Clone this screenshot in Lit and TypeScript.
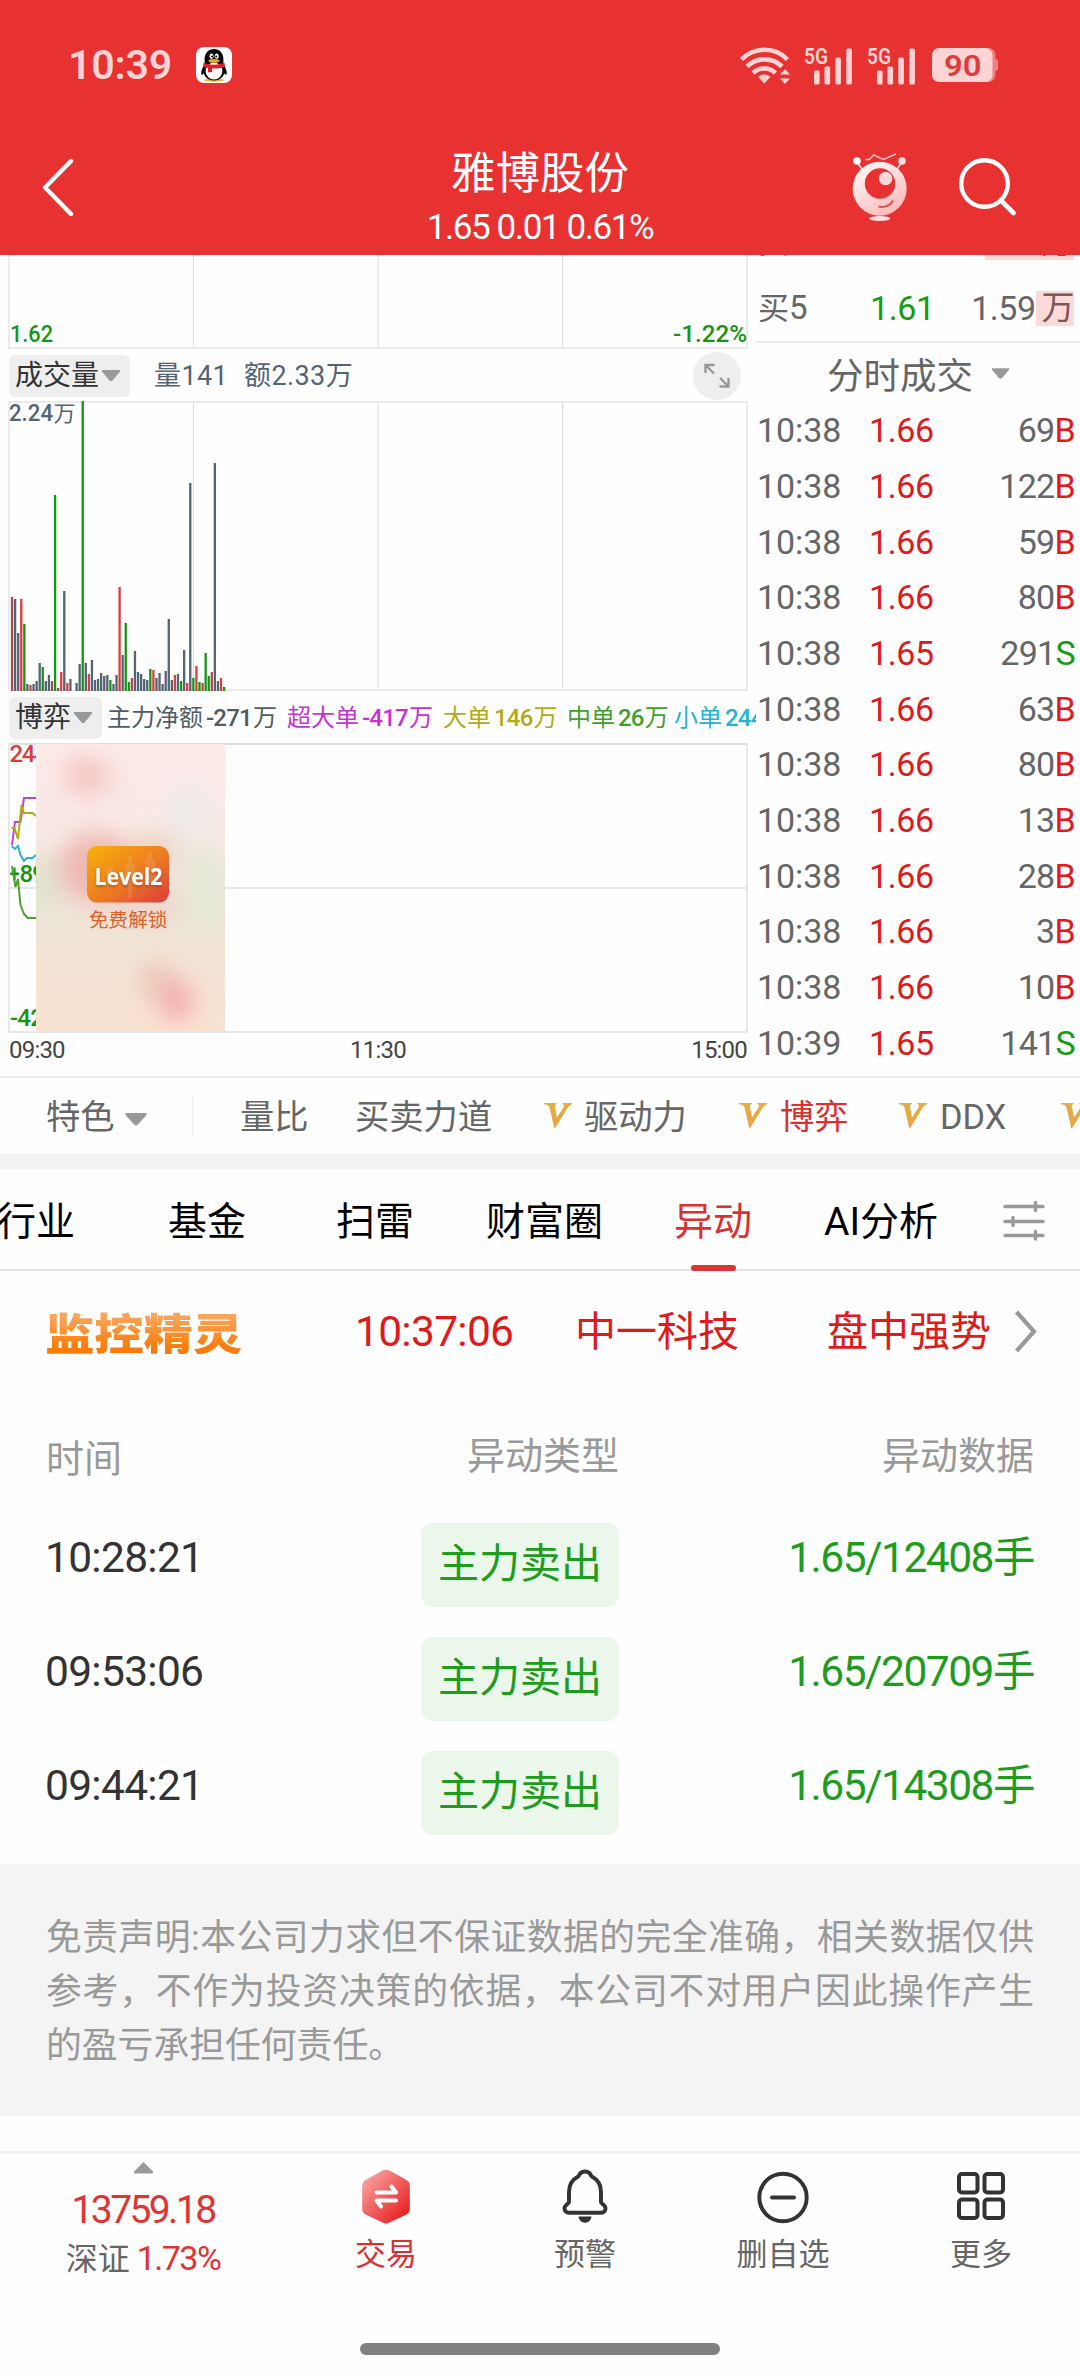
import { LitElement, html, svg, css } from "lit";
import { customElement } from "lit/decorators.js";

const sans = css`Roboto, "Noto Sans CJK SC", sans-serif`;

const reset = css`
  * {
    box-sizing: border-box;
  }
  svg {
    display: block;
    flex: none;
  }
  span {
    white-space: nowrap;
  }
`;

/* ---------- status bar + title bar ---------- */
@customElement("app-header")
class AppHeader extends LitElement {
  static styles = [
    reset,
    css`
      :host {
        display: block;
        height: 255px;
        background: #e83131;
        color: #fff;
        font-family: ${sans};
      }
      .status {
        display: flex;
        align-items: center;
        height: 130px;
        padding-left: 68px;
        padding-right: 82px;
      }
      .clock {
        font-size: 41px;
        font-weight: 600;
        line-height: 1;
        width: 128px;
        letter-spacing: -0.2px;
        color: #fdd3d3;
      }
      .wifi {
        margin-left: auto;
        margin-right: 14px;
      }
      .signal {
        margin-right: 13px;
      }
      .battery {
        margin-left: 2px;
      }
      .bar {
        display: grid;
        grid-template-columns: 300px 1fr 300px;
        height: 125px;
        align-items: center;
      }
      .back {
        margin: -11px 0 0 41px;
      }
      .mid {
        display: flex;
        flex-direction: column;
        align-items: center;
      }
      .name {
        font-size: 44.5px;
        line-height: 54px;
        margin-top: 9.5px;
      }
      .quote {
        font-size: 35px;
        line-height: 40px;
        margin-top: 7.5px;
        letter-spacing: -1.4px;
      }
      .tools {
        display: flex;
        align-items: center;
        gap: 49px;
        padding-left: 72px;
        margin-top: -13px;
      }
    `,
  ];

  signal() {
    return html`<svg class="signal" width="50" height="40" viewBox="0 0 50 40">
      <text x="0" y="18.5" font-size="22" font-weight="600" fill="#fdd3d3" textLength="24" lengthAdjust="spacingAndGlyphs">5G</text>
      <g fill="#fdd3d3">
        <rect x="10" y="25.5" width="5.6" height="14" rx="1.5" />
        <rect x="20.5" y="21.5" width="5.6" height="18" rx="1.5" />
        <rect x="31.3" y="12.5" width="5.6" height="27" rx="1.5" />
        <rect x="42.3" y="3.5" width="5.6" height="36" rx="1.5" />
      </g>
    </svg>`;
  }

  render() {
    return html`
      <div class="status">
        <span class="clock">10:39</span>
        <svg width="36" height="36" viewBox="0 0 36 36">
          <rect width="36" height="36" rx="8" fill="#fff" />
          <ellipse cx="18" cy="33.2" rx="10" ry="1.6" fill="#e8b63a" />
          <path d="M8.600 17.500C6 21 4.600 25 5.400 27.600c1.200.4 2.200-.7 3-2.400zM27.400 17.500c2.600 3.500 4 7.500 3.200 10.100-1.200.4-2.200-.7-3-2.400z" fill="#0a0a0a" />
          <path d="M8.600 16V12C8.600 6 12.600 2 18 2s9.400 4 9.400 10v4c1.500 4 1.800 7 1 10-1.200 4.500-5.200 7.400-10.400 7.400S8.800 30.500 7.600 26c-.8-3-.5-6 1-10z" fill="#0a0a0a" />
          <ellipse cx="18" cy="24" rx="8.400" ry="8.600" fill="#fff" />
          <path d="M7.600 15.800c6 2.600 14.800 2.600 20.800 0l.6 3.600c-3.400 1.500-7 2.100-11 2.200l-2 0v3.600h-4v-4.200c-2-.4-3.600-.9-5-1.600z" fill="#e21f26" />
          <ellipse cx="15.500" cy="9.200" rx="2" ry="2.700" fill="#fff" />
          <ellipse cx="20.700" cy="9.200" rx="2" ry="2.700" fill="#fff" />
          <circle cx="16" cy="9.400" r="1" fill="#000" />
          <circle cx="20.300" cy="9.400" r="1" fill="#000" />
          <ellipse cx="18" cy="13.800" rx="5.600" ry="1.900" fill="#f0a81e" />
        </svg>
        <svg class="wifi" width="50" height="37" viewBox="0 0 50 37">
          <g fill="none" stroke="#fdd3d3" stroke-width="4.600">
            <path d="M1.500 12.500C14-.5 35-.5 47.500 12.500" />
            <path d="M7 19.500c9.500-9.500 25.500-9.500 35 0" />
            <path d="M13 26c6.500-6 16.500-6 22.500 0" />
          </g>
          <path d="M24.300 36.500l-6-6.500c3-3.500 9-3.500 12 0z" fill="#fdd3d3" />
          <path d="M40 27.500h10l-5-5.500zM40 31.500h10l-5 5.500z" fill="#fdd3d3" />
        </svg>
        ${this.signal()} ${this.signal()}
        <svg class="battery" width="66" height="36" viewBox="0 0 66 36">
          <rect x="8" y="1" width="55.500" height="34" rx="7" fill="#f08080" />
          <path d="M63 12c2.500 0 3 1 3 3v6c0 2-.5 3-3 3z" fill="#f08080" />
          <rect x="0" y="1" width="60.500" height="34" rx="7" fill="#fdd3d3" />
          <text x="12" y="28.500" font-size="30" font-weight="600" fill="#e03a3a" textLength="37.500" lengthAdjust="spacingAndGlyphs">90</text>
        </svg>
      </div>
      <div class="bar">
        <svg class="back" width="34" height="58" viewBox="0 0 34 58">
          <path d="M30 3L4 29.500L30 56" fill="none" stroke="#fff" stroke-width="4.400" stroke-linecap="round" stroke-linejoin="round" />
        </svg>
        <div class="mid">
          <span class="name">雅博股份</span>
          <span class="quote">1.65 0.01 0.61%</span>
        </div>
        <div class="tools">
          <svg width="56" height="70" viewBox="0 0 56 70">
            <defs>
              <linearGradient id="face" x1="0.200" y1="0" x2="0.800" y2="1">
                <stop offset="0.200" stop-color="#ffeded" />
                <stop offset="1" stop-color="#fcb5b5" />
              </linearGradient>
            </defs>
            <path d="M5 11l5 7M50 11l-5 7" stroke="#fde0e0" stroke-width="1.600" />
            <circle cx="5" cy="10" r="3.800" fill="#fff" />
            <circle cx="50" cy="10" r="3.800" fill="#fdd" />
            <path d="M13.500 8.500h4l4-4.500 10 4.500L44 3" fill="none" stroke="#fbc0c0" stroke-width="1.500" />
            <circle cx="27.700" cy="37.700" r="27" fill="url(#face)" />
            <circle cx="28" cy="32.500" r="15.200" fill="#e83131" />
            <circle cx="33.600" cy="27.500" r="6.800" fill="#fdd8d8" />
            <path d="M26.500 55.500c6 1.500 12-1 14.500-6" fill="none" stroke="#e05050" stroke-width="2" />
            <ellipse cx="27.700" cy="67.500" rx="10.500" ry="2.400" fill="#fdd" />
          </svg>
          <svg width="60" height="62" viewBox="0 0 60 62">
            <circle cx="27.500" cy="28.500" r="23.300" fill="none" stroke="#fff" stroke-width="4.400" />
            <path d="M44 45.500L56.500 58" stroke="#fff" stroke-width="4.600" stroke-linecap="round" />
          </svg>
        </div>
      </div>
    `;
  }
}

/* ---------- intraday charts ---------- */
type Hue = "r" | "d" | "g" | "s";
const volumes: [Hue, number][] = [
  ["d", 94], ["s", 92], ["s", 58], ["r", 92], ["g", 67], ["s", 7], ["r", 6], ["s", 7], ["s", 10], ["s", 28],
  ["g", 24], ["s", 10], ["s", 16], ["d", 10], ["g", 196], ["s", 3], ["r", 19], ["s", 100], ["r", 8], ["s", 12],
  ["s", 0], ["s", 8], ["s", 27], ["g", 290], ["s", 28], ["r", 17], ["s", 31], ["s", 11], ["s", 12], ["s", 18],
  ["s", 15], ["s", 16], ["g", 11], ["s", 7], ["s", 16], ["r", 104], ["s", 36], ["g", 68], ["g", 9], ["d", 13],
  ["s", 40], ["s", 19], ["s", 17], ["s", 12], ["s", 11], ["g", 22], ["r", 21], ["s", 13], ["s", 18], ["s", 7],
  ["s", 20], ["s", 72], ["s", 11], ["r", 16], ["s", 17], ["g", 10], ["s", 41], ["r", 8], ["s", 208], ["g", 13],
  ["r", 25], ["g", 9], ["r", 8], ["g", 38], ["g", 15], ["d", 19], ["s", 228], ["s", 10], ["r", 13], ["g", 4],
];
const hues: Record<Hue, string> = { r: "#dc3c3c", d: "#a84a50", g: "#149614", s: "#546474" };

const flows = [
  ["主力净额", "-271", "万", "main"],
  ["超大单", "-417", "万", "huge"],
  ["大单", "146", "万", "large"],
  ["中单", "26", "万", "medium"],
  ["小单", "244", "", "small"],
] as const;

@customElement("intraday-chart")
class IntradayChart extends LitElement {
  static styles = [
    reset,
    css`
      :host {
        display: block;
        width: 756px;
        height: 821px;
        overflow: hidden;
        font-family: ${sans};
      }
      .row {
        display: flex;
        align-items: center;
        height: 51px;
        padding-left: 9px;
        line-height: 42px;
      }
      .pill {
        display: flex;
        align-items: center;
        gap: 3px;
        height: 42px;
        padding: 0 10px 0 6px;
        border-radius: 6px;
        background: #eee;
        color: #333;
        font-size: 28px;
      }
      .stat {
        font-size: 27px;
        color: #546474;
        letter-spacing: 0.400px;
      }
      .stat.a {
        margin-left: 24px;
        width: 90px;
      }
      .expand {
        margin-left: auto;
        margin-right: 15px;
      }
      .flows {
        display: grid;
        grid-template-columns: 180px 156px 124px 107px 84px;
        margin-left: 5px;
        font-size: 24px;
      }
      .flow b {
        font-weight: 500;
        margin: 0 1px 0 3px;
        font-size: 24px;
        letter-spacing: -0.800px;
      }
      .main {
        color: #4f5c66;
      }
      .huge {
        color: #c832d2;
      }
      .large {
        color: #b4aa14;
      }
      .medium {
        color: #3fa02d;
      }
      .small {
        color: #23b4d2;
      }
      .times {
        display: flex;
        justify-content: space-between;
        padding: 0 9px;
        height: 40px;
        line-height: 35px;
        font-size: 24px;
        color: #444;
        letter-spacing: -0.800px;
      }
    `,
  ];

  caret(w = 18, h = 11) {
    return html`<svg width=${w} height=${h} viewBox="0 0 18 11"><path d="M0 0h18v1.500L10.500 10.500q-1.500 1-3 0L0 1.500z" fill="#999" /></svg>`;
  }

  render() {
    return html`
      <svg width="756" height="95" viewBox="0 255 756 95">
        <path d="M9 255V348H747V255M378 255v93" fill="none" stroke="#ebebeb" stroke-width="2" />
        <path d="M193.500 255v93M562.500 255v93" stroke="#dcdcdc" />
        <g font-size="24" font-weight="500" fill="#149614">
          <text x="10" y="342" textLength="43" lengthAdjust="spacingAndGlyphs">1.62</text>
          <text x="673" y="342" textLength="74" lengthAdjust="spacingAndGlyphs">-1.22%</text>
        </g>
      </svg>
      <div class="row">
        <div class="pill"><span>成交量</span>${this.caret()}</div>
        <span class="stat a">量141</span>
        <span class="stat">额2.33万</span>
        <svg class="expand" width="48" height="48" viewBox="0 0 48 48">
          <circle cx="24" cy="24" r="24" fill="#eee" />
          <path d="M12.500 21V13H21.500M13.500 14L21 21.500M35.500 26v8.500H26.500M34.500 33.500L27 26" fill="none" stroke="#999" stroke-width="2.400" />
        </svg>
      </div>
      <svg width="756" height="291" viewBox="0 401 756 291">
        <path d="M9 402H747V690H9zM378 402v288" fill="none" stroke="#ebebeb" stroke-width="2" />
        <path d="M193.500 402v288M562.500 402v288" stroke="#dcdcdc" />
        <text x="9" y="420.500" font-size="24" fill="#546474" font-weight="500" textLength="44" lengthAdjust="spacingAndGlyphs">2.24</text>
        <text x="53.500" y="420.500" font-size="22" fill="#546474">万</text>
        ${volumes.map(
          ([c, h], i) => svg`<rect x=${(10.9 + i * 3.073).toFixed(2)} y=${691 - h} width="2.300" height=${h} fill=${hues[c]} />`
        )}
      </svg>
      <div class="row">
        <div class="pill"><span>博弈</span>${this.caret()}</div>
        <div class="flows">
          ${flows.map(([k, n, u, c]) => html`<span class="flow ${c}">${k}<b>${n}</b>${u}</span>`)}
        </div>
      </div>
      <svg width="756" height="290" viewBox="0 743 756 290">
        <defs>
          <linearGradient id="veil" x1="0" y1="0" x2="0" y2="1">
            <stop offset="0" stop-color="#fceae9" />
            <stop offset="0.350" stop-color="#f8e9e5" />
            <stop offset="0.620" stop-color="#efe5d8" />
            <stop offset="1" stop-color="#fae2d0" />
          </linearGradient>
          <linearGradient id="badge" x1="0" y1="0" x2="1" y2="1">
            <stop offset="0" stop-color="#f8b208" />
            <stop offset="0.550" stop-color="#ec7a22" />
            <stop offset="1" stop-color="#dc3c40" />
          </linearGradient>
          <filter id="soft" x="-60%" y="-60%" width="220%" height="220%"><feGaussianBlur stdDeviation="12" /></filter>
          <filter id="shade"><feDropShadow dx="0" dy="2" stdDeviation="1.500" flood-color="#a03c10" flood-opacity="0.600" /></filter>
          <clipPath id="pane"><rect x="36" y="744" width="189" height="287" /></clipPath>
          <clipPath id="edge"><rect x="0" y="743" width="36" height="290" /></clipPath>
        </defs>
        <path d="M9 744H747" stroke="#dedede" stroke-width="2" />
        <path d="M9 744V1032H747V744M9 888H747" fill="none" stroke="#e8e8e8" stroke-width="2" />
        <g clip-path="url(#edge)" fill="none" stroke-width="2">
          <g font-size="24" font-weight="500" stroke="none">
            <text x="9.500" y="762" fill="#dc3c3c" letter-spacing="-1.300">244</text>
            <text x="9.500" y="882" fill="#149614" textLength="10" lengthAdjust="spacingAndGlyphs">+</text>
            <text x="19.500" y="882" fill="#149614" letter-spacing="-1">89</text>
            <text x="10" y="1026" fill="#149614" letter-spacing="-0.800">-42</text>
          </g>
          <path d="M12 845L15 822H20.500L24 798H36" stroke="#be46c8" />
          <path d="M11.500 828H14.500L18 839L21.500 805L24 813H32.500L36 816" stroke="#b4aa14" />
          <path d="M11.500 846L15 849L18 846L20.500 855L24 861L27 858H32.500L36 855" stroke="#23b4d2" />
          <path d="M12 866L15.500 887L18 879L20.500 905L24 914L27.500 918H36" stroke="#4ba032" />
        </g>
        <g clip-path="url(#pane)">
          <rect x="36" y="744" width="189" height="287" fill="url(#veil)" />
          <g filter="url(#soft)">
            <ellipse cx="86" cy="776" rx="22" ry="19" fill="#f5c4c0" />
            <ellipse cx="112" cy="782" rx="10" ry="9" fill="#f0dcd4" />
            <ellipse cx="188" cy="812" rx="20" ry="28" fill="#ededea" />
            <ellipse cx="42" cy="885" rx="20" ry="32" fill="#e0e3ce" />
            <ellipse cx="203" cy="888" rx="26" ry="44" fill="#e5e8d8" />
            <ellipse cx="96" cy="868" rx="38" ry="36" fill="#efb8b2" />
            <ellipse cx="155" cy="850" rx="24" ry="18" fill="#ecd3c2" />
            <ellipse cx="150" cy="905" rx="34" ry="16" fill="#efd3cb" />
            <ellipse cx="157" cy="982" rx="18" ry="20" fill="#ecc6b8" />
            <ellipse cx="177" cy="1001" rx="15" ry="20" fill="#f4a6a8" />
          </g>
        </g>
        <rect x="87" y="846" width="82" height="56.600" rx="10" fill="url(#badge)" />
        <path d="M107 867h6v18h-6zM125 864h10v20h-10zM128 856h4v42h-4zM145 859h10v19h-10zM148 852h4v32h-4z" fill="#fff" fill-opacity="0.100" />
        <text x="94.500" y="884.500" font-family="Open Sans, sans-serif" font-size="22.500" font-weight="700" fill="#fff" filter="url(#shade)" textLength="68" lengthAdjust="spacingAndGlyphs">Level2</text>
        <text x="89" y="926.500" font-size="19.600" fill="#e0602a">免费解锁</text>
      </svg>
      <div class="times"><span>09:30</span><span>11:30</span><span>15:00</span></div>
    `;
  }
}

/* ---------- order book tail + tick list ---------- */
const ticks: [string, string, string, "B" | "S"][] = [
  ["10:38", "1.66", "69", "B"],
  ["10:38", "1.66", "122", "B"],
  ["10:38", "1.66", "59", "B"],
  ["10:38", "1.66", "80", "B"],
  ["10:38", "1.65", "291", "S"],
  ["10:38", "1.66", "63", "B"],
  ["10:38", "1.66", "80", "B"],
  ["10:38", "1.66", "13", "B"],
  ["10:38", "1.66", "28", "B"],
  ["10:38", "1.66", "3", "B"],
  ["10:38", "1.66", "10", "B"],
  ["10:39", "1.65", "141", "S"],
];

@customElement("tick-list")
class TickList extends LitElement {
  static styles = [
    reset,
    css`
      :host {
        display: block;
        width: 324px;
        height: 821px;
        overflow: hidden;
        font-family: ${sans};
        font-size: 34px;
        color: #666;
      }
      .book {
        display: flex;
        flex-direction: column;
        justify-content: flex-end;
        height: 88px;
        overflow: hidden;
        border-bottom: 2px solid #ebebeb;
      }
      .line {
        display: grid;
        flex: none;
        grid-template-columns: 112px 1fr auto;
        align-items: center;
        height: 55.700px;
        padding-left: 1px;
        padding-right: 5px;
        line-height: 36px;
      }
      .book .line {
        height: 66px;
        padding-right: 6px;
        padding-left: 2px;
      }
      .lv {
        font-size: 33px;
      }
      .lv i {
        font-style: normal;
        font-size: 31px;
      }
      .p {
        letter-spacing: -0.400px;
      }
      .q {
        letter-spacing: -0.700px;
      }
      .tick .t {
        letter-spacing: -0.100px;
      }
      .amt {
        display: flex;
        align-items: center;
        letter-spacing: -0.500px;
      }
      .depth {
        height: 35px;
        line-height: 34px;
        background: #fbdad9;
        color: #7d5656;
        font-size: 33px;
        padding-left: 6px;
      }
      .wide {
        width: 89px;
        text-align: right;
      }
      .r {
        color: #e01a1a;
      }
      .g {
        color: #149c14;
      }
      .title {
        display: flex;
        align-items: center;
        gap: 19px;
        height: 59.300px;
        padding-left: 71px;
        padding-top: 9px;
        font-size: 36.500px;
        line-height: 40px;
      }
      .title svg {
        margin-top: -7px;
      }
    `,
  ];

  render() {
    return html`
      <div class="book">
        <div class="line">
          <span class="lv"><i>买</i></span><span></span>
          <span class="depth wide">万</span>
        </div>
        <div class="line">
          <span class="lv"><i>买</i>5</span>
          <span class="p g">1.61</span>
          <span class="amt">1.59<span class="depth">万</span></span>
        </div>
      </div>
      <div class="title">
        <span>分时成交</span>
        <svg width="17" height="11" viewBox="0 0 18 11"><path d="M0 0h18v1.500L10.500 10.500q-1.500 1-3 0L0 1.500z" fill="#999" /></svg>
      </div>
      ${ticks.map(
        ([t, p, q, s]) => html`<div class="line tick">
          <span class="t">${t}</span><span class="p r">${p}</span>
          <span class="q">${q}<span class=${s === "B" ? "r" : "g"}>${s}</span></span>
        </div>`
      )}
    `;
  }
}

/* ---------- page ---------- */
const alerts = [
  ["10:28:21", "1.65/12408手"],
  ["09:53:06", "1.65/20709手"],
  ["09:44:21", "1.65/14308手"],
];

@customElement("app-root")
class AppRoot extends LitElement {
  static styles = [
    reset,
    css`
      :host {
        display: block;
        width: 1080px;
        height: 2376px;
        overflow: hidden;
        background: #fefefe;
        font-family: ${sans};
        color: #333;
      }
      .market {
        display: flex;
        height: 821px;
      }
      .indicators {
        display: grid;
        grid-template-columns: 147px 162px 189px 40px 155px 41px 119px 41px 121px 28px;
        grid-template-rows: 75px;
        align-items: center;
        height: 77px;
        padding-left: 46px;
        width: 1080px;
        overflow: hidden;
        border-top: 2px solid #ececec;
        font-size: 34.300px;
        line-height: 40px;
        color: #666;
      }
      .indicators > span,
      .feature span {
        padding-top: 3px;
      }
      .indicators .ratio {
        padding-left: 47px;
      }
      .feature {
        display: flex;
        align-items: center;
        gap: 10px;
        height: 41px;
        border-right: 1px solid #eee;
      }
      .feature svg {
        margin-top: 8px;
      }
      .band {
        height: 16px;
        background: #f3f3f3;
      }
      .tabs {
        display: grid;
        grid-template-columns: 168px 168px 150px 188px 150px 179px 42px;
        position: relative;
        align-items: center;
        height: 102px;
        padding-top: 6px;
        font-size: 39px;
        line-height: 46px;
        color: #000;
        border-bottom: 2px solid #e2e2e2;
      }
      .tabs .cut {
        margin-left: -3px;
      }
      .tabs .mark {
        position: absolute;
        left: 691px;
        bottom: -2px;
        width: 45px;
        height: 6px;
        border-radius: 3px;
        background: #e03434;
      }
      .tabs svg {
        margin-top: -3px;
      }
      .red {
        color: #dc3030;
      }
      .monitor {
        display: flex;
        align-items: center;
        height: 121px;
        padding-left: 45px;
        font-size: 41px;
        line-height: 48px;
        color: #e01a1a;
      }
      .logo {
        font-family: "Noto Sans CJK SC", sans-serif;
        font-weight: 900;
        font-size: 49.500px;
        line-height: 50px;
        letter-spacing: -0.200px;
        background: linear-gradient(#f9a55a 15%, #fb7c0a 85%);
        -webkit-background-clip: text;
        background-clip: text;
        color: transparent;
        transform: scaleY(0.880);
        width: 310px;
      }
      .mt {
        font-size: 42.500px;
        letter-spacing: -0.700px;
        width: 220px;
      }
      .mn {
        width: 252px;
      }
      .mw {
        width: 187px;
      }
      .head,
      .alert {
        display: grid;
        grid-template-columns: 373px 200px 1fr;
        padding: 0 46px;
        font-size: 38px;
        line-height: 44px;
      }
      .head {
        height: 109px;
        color: #999;
        padding-top: 42px;
      }
      .head .first {
        padding-top: 3px;
      }
      .end {
        text-align: right;
      }
      .alert {
        height: 114px;
        font-size: 41px;
        align-items: start;
        padding-top: 22px;
      }
      .alert .time {
        font-size: 42.500px;
        letter-spacing: -0.700px;
        line-height: 70px;
        margin-left: -1px;
      }
      .alert .data {
        color: #1e9c1e;
        font-size: 42.500px;
        letter-spacing: -1.500px;
        line-height: 70px;
        text-align: right;
      }
      .badge {
        justify-self: end;
        width: 198px;
        height: 84px;
        border-radius: 12px;
        background: #ebf7eb;
        color: #1e9c1e;
        text-align: center;
        line-height: 83px;
      }
      .disclaimer {
        margin-top: 21px;
        height: 252px;
        padding: 47px 46px 0;
        background: #f4f4f4;
        color: #999;
        font-size: 35.800px;
        line-height: 54px;
      }
      .disclaimer p {
        margin: 0;
        text-align-last: justify;
        white-space: nowrap;
      }
      .disclaimer p:last-child {
        text-align-last: left;
      }
      .nav {
        display: grid;
        grid-template-columns: 286px 200px 198px 198px 198px;
        height: 130px;
        margin-top: 35px;
        border-top: 3px solid #f2f2f2;
        font-size: 31px;
        line-height: 36px;
        color: #666;
      }
      .item {
        display: flex;
        flex-direction: column;
        align-items: center;
        padding-top: 14px;
      }
      .item svg {
        height: 58px;
        margin-bottom: 11px;
      }
      .index {
        display: flex;
        flex-direction: column;
        align-items: center;
        padding-top: 8px;
      }
      .index .value {
        font-size: 39px;
        line-height: 44px;
        letter-spacing: -2.600px;
        margin-top: 14px;
        color: #e03434;
      }
      .index .pct {
        font-size: 32px;
        margin-top: 8px;
      }
      .index .pct i {
        font-style: normal;
        font-size: 34px;
        letter-spacing: -1.500px;
        margin-left: 7px;
        color: #e03434;
      }
      .home {
        width: 360px;
        height: 12px;
        margin: 62px auto 0;
        border-radius: 6px;
        background: #808080;
      }
    `,
  ];

  vip() {
    return html`<svg width="28" height="26" viewBox="0 0 28 26">
      <defs><linearGradient id="gold" x1="0" y1="0" x2="0" y2="1"><stop offset="0" stop-color="#dfb04a" /><stop offset="1" stop-color="#eda03c" /></linearGradient></defs>
      <path d="M0 0H12.500V1.200Q10.500 1.500 11 4L13 14.500L19.500 4.500Q21 1.500 18.500 1.200V0H28V1.200Q25.500 1.800 23.500 5L10.500 26L5.500 4.500Q4.500 1.500 0 1.200Z" fill="url(#gold)" />
    </svg>`;
  }

  render() {
    return html`
      <app-header></app-header>
      <div class="market"><intraday-chart></intraday-chart><tick-list></tick-list></div>

      <div class="indicators">
        <div class="feature">
          <span>特色</span>
          <svg width="22" height="13" viewBox="0 0 22 13"><path d="M1 0h20q1.500 1 0 2.500L13 11.500q-2 2-4 0L1 2.500Q-.5 1 1 0z" fill="#999" /></svg>
        </div>
        <span class="ratio">量比</span>
        <span>买卖力道</span>
        ${this.vip()}<span>驱动力</span>
        ${this.vip()}<span class="red">博弈</span>
        ${this.vip()}<span>DDX</span>
        ${this.vip()}
      </div>
      <div class="band"></div>

      <div class="tabs">
        <span class="cut">行业</span>
        <span>基金</span>
        <span>扫雷</span>
        <span>财富圈</span>
        <span class="red">异动</span>
        <span>AI分析</span>
        <svg width="42" height="40" viewBox="0 0 42 40">
          <g stroke="#999" stroke-width="3.400" stroke-linecap="round">
            <path d="M2 5.500H40M32.500 1.500V9.500M2 20.500H40M10 16.500V24.500M2 34.500H40M32.500 30.500V38" />
          </g>
        </svg>
        <div class="mark"></div>
      </div>

      <div class="monitor">
        <span class="logo">监控精灵</span>
        <span class="mt">10:37:06</span>
        <span class="mn">中一科技</span>
        <span class="mw">盘中强势</span>
        <svg width="24" height="44" viewBox="0 0 24 44"><path d="M2.500 2L20 21.500L2.500 41" fill="none" stroke="#999" stroke-width="4.200" /></svg>
      </div>

      <div class="head">
        <span class="first">时间</span><span class="end">异动类型</span><span class="end">异动数据</span>
      </div>
      ${alerts.map(
        ([t, d]) => html`<div class="alert">
          <span class="time">${t}</span><span class="badge">主力卖出</span><span class="data">${d}</span>
        </div>`
      )}

      <div class="disclaimer">
        <p>免责声明:本公司力求但不保证数据的完全准确，相关数据仅供</p>
        <p>参考，不作为投资决策的依据，本公司不对用户因此操作产生</p>
        <p>的盈亏承担任何责任。</p>
      </div>

      <div class="nav">
        <div class="index">
          <svg width="19" height="12" viewBox="0 0 19 12"><path d="M9.500 0L19 9.500V11.500H0V9.500z" fill="#999" /></svg>
          <span class="value">13759.18</span>
          <span class="pct">深证<i>1.73%</i></span>
        </div>
        <div class="item red">
          <svg width="60" height="58" viewBox="0 0 60 58">
            <defs><linearGradient id="hex" x1="0.100" y1="0.050" x2="0.900" y2="0.900"><stop offset="0" stop-color="#f8a8a8" /><stop offset="0.500" stop-color="#f06060" /><stop offset="1" stop-color="#e82020" /></linearGradient></defs>
            <path d="M26.500 2.600q3.500-1.800 7 0L51 12.200q2.800 1.700 2.800 5v24q0 3.300-2.800 5L33.500 54.600q-3.500 1.800-7 0L9 46.200q-2.800-1.700-2.800-5v-24q0-3.300 2.800-5z" fill="url(#hex)" />
            <path d="M20.500 24.500H40L35.500 18.500M40 32.500H20.500L25 38.500" fill="none" stroke="#fff" stroke-width="4" stroke-linecap="round" stroke-linejoin="round" />
          </svg>
          <span>交易</span>
        </div>
        <div class="item">
          <svg width="50" height="58" viewBox="0 0 50 58">
            <path d="M25 3.500c3.500 0 5.500 2 6.500 4.800 6.500 3.500 9.500 9 9.500 15.500v10.500c0 1.500 4.500 2 4.500 6.200 0 2.500-1.800 4.300-4.500 4.300H9c-2.700 0-4.500-1.800-4.500-4.300C4.500 36.300 9 35.800 9 34.300V23.800c0-6.500 3-12 9.500-15.500 1-2.800 3-4.800 6.500-4.800z" fill="none" stroke="#333" stroke-width="3.900" stroke-linejoin="round" />
            <path d="M18.500 48.500h13c-.5 3.700-3 6.200-6.500 6.200s-6-2.500-6.500-6.200z" fill="#333" />
          </svg>
          <span>预警</span>
        </div>
        <div class="item">
          <svg width="54" height="58" viewBox="0 0 54 58">
            <circle cx="27" cy="29.500" r="23.700" fill="none" stroke="#333" stroke-width="3.900" />
            <path d="M16 29.500H38" stroke="#333" stroke-width="4" stroke-linecap="round" />
          </svg>
          <span>删自选</span>
        </div>
        <div class="item">
          <svg width="50" height="58" viewBox="0 0 50 58">
            <g fill="none" stroke="#333" stroke-width="4">
              <rect x="3" y="6" width="18.500" height="18.500" rx="3" />
              <rect x="28.500" y="6" width="18.500" height="18.500" rx="3" />
              <rect x="3" y="31.500" width="18.500" height="18.500" rx="3" />
              <rect x="28.500" y="31.500" width="18.500" height="18.500" rx="3" />
            </g>
          </svg>
          <span>更多</span>
        </div>
      </div>
      <div class="home"></div>
    `;
  }
}
